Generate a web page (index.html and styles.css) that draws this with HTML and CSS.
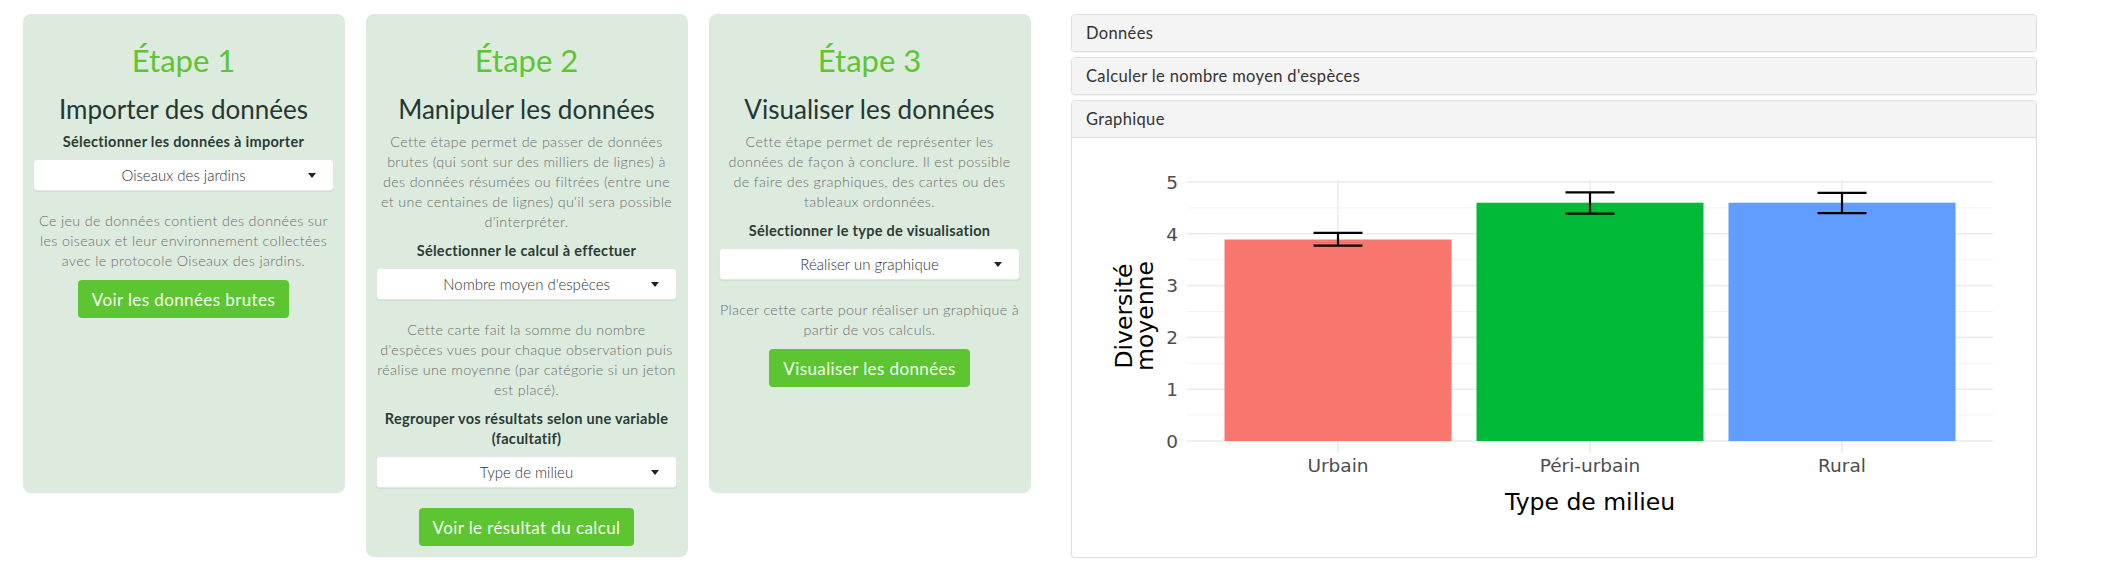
FILE: index.html
```html
<!DOCTYPE html>
<html lang="fr">
<head>
<meta charset="utf-8">
<title>Étapes</title>
<link rel="stylesheet" href="styles.css">
</head>
<body>
<div class="page">
  <div class="steps">
    <section class="card">
      <h2 class="step">Étape 1</h2>
      <h3 class="heading">Importer des données</h3>
      <div class="label">Sélectionner les données à importer</div>
      <div class="select"><span class="sel-text">Oiseaux des jardins</span><span class="caret"></span></div>
      <p class="desc">Ce jeu de données contient des données sur<br>les oiseaux et leur environnement collectées<br>avec le protocole Oiseaux des jardins.</p>
      <div class="btn">Voir les données brutes</div>
    </section>
    <section class="card">
      <h2 class="step">Étape 2</h2>
      <h3 class="heading">Manipuler les données</h3>
      <p class="desc">Cette étape permet de passer de données<br>brutes (qui sont sur des milliers de lignes) à<br>des données résumées ou filtrées (entre une<br>et une centaines de lignes) qu'il sera possible<br>d'interpréter.</p>
      <div class="label">Sélectionner le calcul à effectuer</div>
      <div class="select"><span class="sel-text">Nombre moyen d'espèces</span><span class="caret"></span></div>
      <p class="desc">Cette carte fait la somme du nombre<br>d'espèces vues pour chaque observation puis<br>réalise une moyenne (par catégorie si un jeton<br>est placé).</p>
      <div class="label">Regrouper vos résultats selon une variable<br>(facultatif)</div>
      <div class="select"><span class="sel-text">Type de milieu</span><span class="caret"></span></div>
      <div class="btn">Voir le résultat du calcul</div>
    </section>
    <section class="card">
      <h2 class="step">Étape 3</h2>
      <h3 class="heading">Visualiser les données</h3>
      <p class="desc">Cette étape permet de représenter les<br>données de façon à conclure. Il est possible<br>de faire des graphiques, des cartes ou des<br>tableaux ordonnées.</p>
      <div class="label">Sélectionner le type de visualisation</div>
      <div class="select"><span class="sel-text">Réaliser un graphique</span><span class="caret"></span></div>
      <p class="desc">Placer cette carte pour réaliser un graphique à<br>partir de vos calculs.</p>
      <div class="btn">Visualiser les données</div>
    </section>
  </div>
  <div class="results">
    <div class="panel"><div class="panel-heading">Données</div></div>
    <div class="panel"><div class="panel-heading">Calculer le nombre moyen d'espèces</div></div>
    <div class="panel">
      <div class="panel-heading open">Graphique</div>
      <div class="panel-body">
        <svg class="chart" width="964" height="419" viewBox="1072 138 964 419" xmlns="http://www.w3.org/2000/svg">
          <g class="grid-minor">
            <line x1="1187" x2="1993" y1="415.1" y2="415.1"/>
            <line x1="1187" x2="1993" y1="363.3" y2="363.3"/>
            <line x1="1187" x2="1993" y1="311.5" y2="311.5"/>
            <line x1="1187" x2="1993" y1="259.7" y2="259.7"/>
            <line x1="1187" x2="1993" y1="207.9" y2="207.9"/>
          </g>
          <g class="grid-major">
            <line x1="1187" x2="1993" y1="441" y2="441"/>
            <line x1="1187" x2="1993" y1="389.2" y2="389.2"/>
            <line x1="1187" x2="1993" y1="337.4" y2="337.4"/>
            <line x1="1187" x2="1993" y1="285.6" y2="285.6"/>
            <line x1="1187" x2="1993" y1="233.8" y2="233.8"/>
            <line x1="1187" x2="1993" y1="182" y2="182"/>
            <line x1="1338" x2="1338" y1="180" y2="453"/>
            <line x1="1590" x2="1590" y1="180" y2="453"/>
            <line x1="1842" x2="1842" y1="180" y2="453"/>
          </g>
          <rect x="1224.5" y="239.5" width="227" height="201.5" fill="#F8766D"/>
          <rect x="1476.5" y="202.7" width="227" height="238.3" fill="#00BA38"/>
          <rect x="1728.5" y="202.7" width="227" height="238.3" fill="#619CFF"/>
          <g class="err">
            <line x1="1313.5" x2="1362.5" y1="232.8" y2="232.8"/>
            <line x1="1313.5" x2="1362.5" y1="245.7" y2="245.7"/>
            <line x1="1338" x2="1338" y1="232.8" y2="245.7"/>
            <line x1="1565.5" x2="1614.5" y1="192.4" y2="192.4"/>
            <line x1="1565.5" x2="1614.5" y1="213.6" y2="213.6"/>
            <line x1="1590" x2="1590" y1="192.4" y2="213.6"/>
            <line x1="1817.5" x2="1866.5" y1="192.9" y2="192.9"/>
            <line x1="1817.5" x2="1866.5" y1="213.1" y2="213.1"/>
            <line x1="1842" x2="1842" y1="192.9" y2="213.1"/>
          </g>
          <g class="tick-y">
            <text x="1178" y="447.7">0</text>
            <text x="1178" y="395.9">1</text>
            <text x="1178" y="344.1">2</text>
            <text x="1178" y="292.3">3</text>
            <text x="1178" y="240.5">4</text>
            <text x="1178" y="188.7">5</text>
          </g>
          <g class="tick-x">
            <text x="1338" y="472">Urbain</text>
            <text x="1590" y="472">Péri-urbain</text>
            <text x="1842" y="472">Rural</text>
          </g>
          <text class="axis-title" x="1590" y="510">Type de milieu</text>
          <g class="axis-title" transform="translate(0 316)">
            <text transform="translate(1132 0) rotate(-90)">Diversité</text>
            <text transform="translate(1153 0) rotate(-90)">moyenne</text>
          </g>
        </svg>
      </div>
    </div>
  </div>
</div>
</body>
</html>
```
FILE: styles.css
```css
html, body {
  margin: 0;
  padding: 0;
  background: #ffffff;
}

.page {
  display: flex;
  align-items: flex-start;
  padding: 14px 0 0 23px;
  font-family: Lato, "Open Sans", sans-serif;
}

.steps {
  display: flex;
  align-items: flex-start;
  gap: 21px;
}

.card {
  width: 322px;
  box-sizing: border-box;
  min-height: 479px;
  padding: 0 11px 11px 10px;
  background: #ddebde;
  border-radius: 8px;
  display: flex;
  flex-direction: column;
  align-items: stretch;
  text-align: center;
}

.step {
  margin: 28px 0 0;
  font-size: 31px;
  line-height: 36px;
  font-weight: 400;
  color: #5dc534;
}

.heading {
  margin: 16px 0 8px;
  font-size: 26px;
  line-height: 30px;
  font-weight: 400;
  color: #253733;
}

.label {
  margin: 0 0 7px;
  font-size: 14.5px;
  line-height: 20px;
  font-weight: 700;
  letter-spacing: 0.3px;
  color: #2b3b37;
}

.select {
  display: grid;
  grid-template-columns: 1fr auto 1fr;
  align-items: center;
  height: 32px;
  box-sizing: border-box;
  margin: 0 0 20px;
  background: #ffffff;
  border: 1px solid #e2e6e2;
  border-radius: 4px;
  box-shadow: 0 1px 1px rgba(0, 0, 0, 0.06);
}

.sel-text {
  grid-column: 2;
  font-size: 15px;
  font-weight: 300;
  color: #333333;
  white-space: nowrap;
}

.caret {
  grid-column: 3;
  justify-self: end;
  margin-right: 17px;
  width: 0;
  height: 0;
  border-top: 5px solid #222222;
  border-left: 4.5px solid transparent;
  border-right: 4.5px solid transparent;
}

.desc {
  margin: 0 0 9px;
  font-size: 14.3px;
  line-height: 20px;
  font-weight: 300;
  letter-spacing: 0.35px;
  color: #6d6d6d;
  white-space: nowrap;
}

.btn {
  align-self: center;
  box-sizing: border-box;
  height: 38px;
  padding: 0 14px;
  display: flex;
  align-items: center;
  background: #5dc532;
  border-radius: 4px;
  color: #f4fff0;
  font-size: 17px;
  font-weight: 400;
  letter-spacing: 0.4px;
}

.results {
  margin-left: 40px;
  width: 966px;
  display: flex;
  flex-direction: column;
  gap: 5px;
}

.panel {
  border: 1px solid #dddddd;
  border-radius: 4px;
  background: #ffffff;
  box-shadow: 0 1px 1px rgba(0, 0, 0, 0.05);
  overflow: hidden;
}

.panel-heading {
  height: 36px;
  box-sizing: border-box;
  padding: 9px 14px;
  background: #f4f4f4;
  font-size: 16.5px;
  line-height: 18px;
  letter-spacing: 0.35px;
  color: #333333;
}

.panel-heading.open {
  border-bottom: 1px solid #dddddd;
  height: 37px;
}

.panel-body {
  height: 419px;
}

.chart {
  display: block;
  font-family: "DejaVu Sans", sans-serif;
}

.grid-major line {
  stroke: #ebebeb;
  stroke-width: 1.6;
}

.grid-minor line {
  stroke: #f2f2f2;
  stroke-width: 0.9;
}

.err line {
  stroke: #000000;
  stroke-width: 2.2;
}

.tick-y text {
  font-size: 18.5px;
  fill: #4d4d4d;
  text-anchor: end;
}

.tick-x text {
  font-size: 18.5px;
  fill: #4d4d4d;
  text-anchor: middle;
}

.axis-title {
  font-size: 23.5px;
  fill: #000000;
  text-anchor: middle;
}
```
